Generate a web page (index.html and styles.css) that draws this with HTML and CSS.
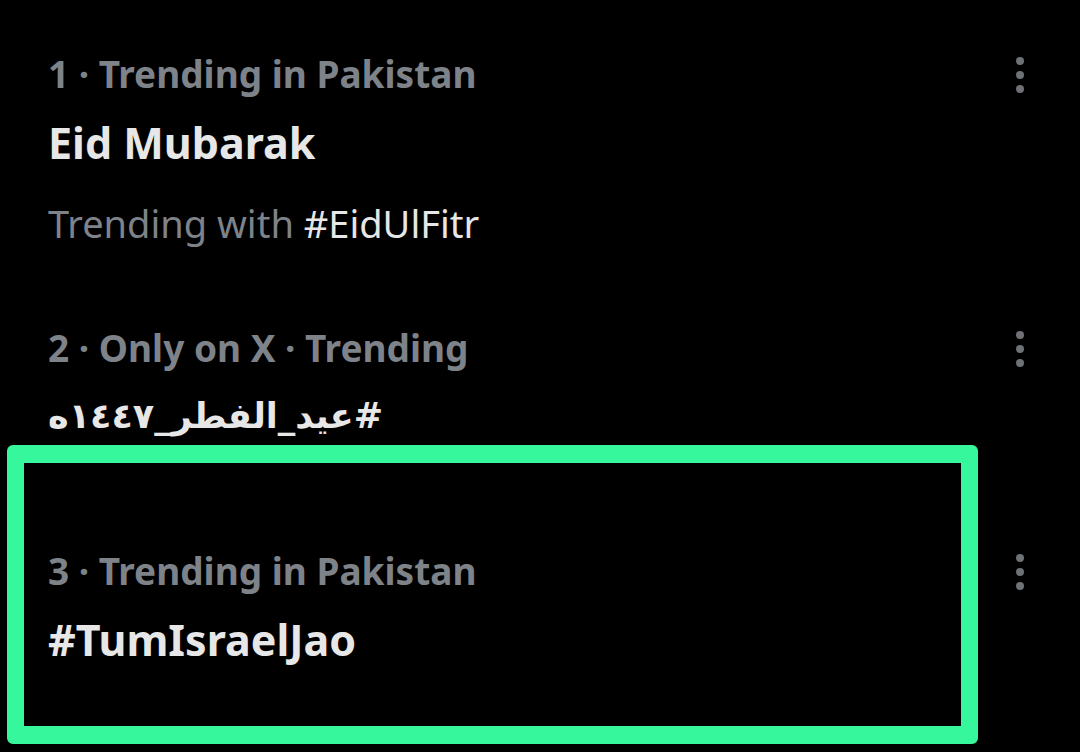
FILE: index.html
```html
<!DOCTYPE html>
<html lang="en">
<head>
<meta charset="utf-8">
<title>Trends</title>
<link rel="stylesheet" href="styles.css">
</head>
<body>
<main class="trends">
  <article class="trend trend-1">
    <div class="trend-body">
      <div class="meta">1 · Trending in Pakistan</div>
      <div class="title">Eid Mubarak</div>
      <div class="sub">Trending with <span class="tag">#EidUlFitr</span></div>
    </div>
    <div class="more"><svg width="8" height="36" viewBox="0 0 8 36"><circle cx="4" cy="4" r="4"/><circle cx="4" cy="18" r="4"/><circle cx="4" cy="32" r="4"/></svg></div>
  </article>
  <article class="trend trend-2">
    <div class="trend-body">
      <div class="meta">2 · Only on X · Trending</div>
      <div class="title title-ar"><span dir="rtl">#عيد_الفطر_١٤٤٧ه</span></div>
    </div>
    <div class="more"><svg width="8" height="36" viewBox="0 0 8 36"><circle cx="4" cy="4" r="4"/><circle cx="4" cy="18" r="4"/><circle cx="4" cy="32" r="4"/></svg></div>
  </article>
  <article class="trend trend-3 highlighted">
    <div class="trend-body">
      <div class="meta">3 · Trending in Pakistan</div>
      <div class="title">#TumIsraelJao</div>
    </div>
    <div class="more"><svg width="8" height="36" viewBox="0 0 8 36"><circle cx="4" cy="4" r="4"/><circle cx="4" cy="18" r="4"/><circle cx="4" cy="32" r="4"/></svg></div>
  </article>
</main>
</body>
</html>
```

FILE: styles.css
```css
html, body {
  margin: 0;
  padding: 0;
  background: #000;
}
body {
  width: 1080px;
  height: 752px;
  overflow: hidden;
  font-family: "Noto Sans", "DejaVu Sans", sans-serif;
  color: #e7e7e7;
}
.trends {
  display: flex;
  flex-direction: column;
}
.trend {
  position: relative;
  display: flex;
  align-items: flex-start;
  padding: 0 56px 0 48px;
}
.trend-1 { padding-top: 49px; }
.trend-2 { padding-top: 75px; }
.trend-3 { padding-top: 109px; padding-bottom: 60px; }
.trend-body {
  flex: 1;
  display: flex;
  flex-direction: column;
}
.meta {
  font-size: 37px;
  font-weight: 700;
  line-height: 50px;
  color: #7e838a;
}
.title {
  margin-top: 19px;
  font-size: 43px;
  font-weight: 700;
  line-height: 50px;
  color: #e7e7e7;
}
.trend-2 .title { margin-top: 14px; }
.title-ar span {
  font-family: "DejaVu Sans", sans-serif;
  font-size: 35px;
  line-height: 1;
}
.sub {
  margin-top: 30px;
  font-size: 38px;
  font-weight: 400;
  line-height: 50px;
  color: #7e838a;
}
.tag { color: #e7e7e7; }
.more {
  margin-top: 8px;
  display: flex;
}
.more svg { fill: #6e7176; display: block; }
.highlighted::before {
  content: "";
  position: absolute;
  left: 7px;
  top: 8px;
  width: 937px;
  height: 263px;
  border-style: solid;
  border-color: #36f79c;
  border-width: 18px 17px;
  border-radius: 6px;
  pointer-events: none;
}
```
